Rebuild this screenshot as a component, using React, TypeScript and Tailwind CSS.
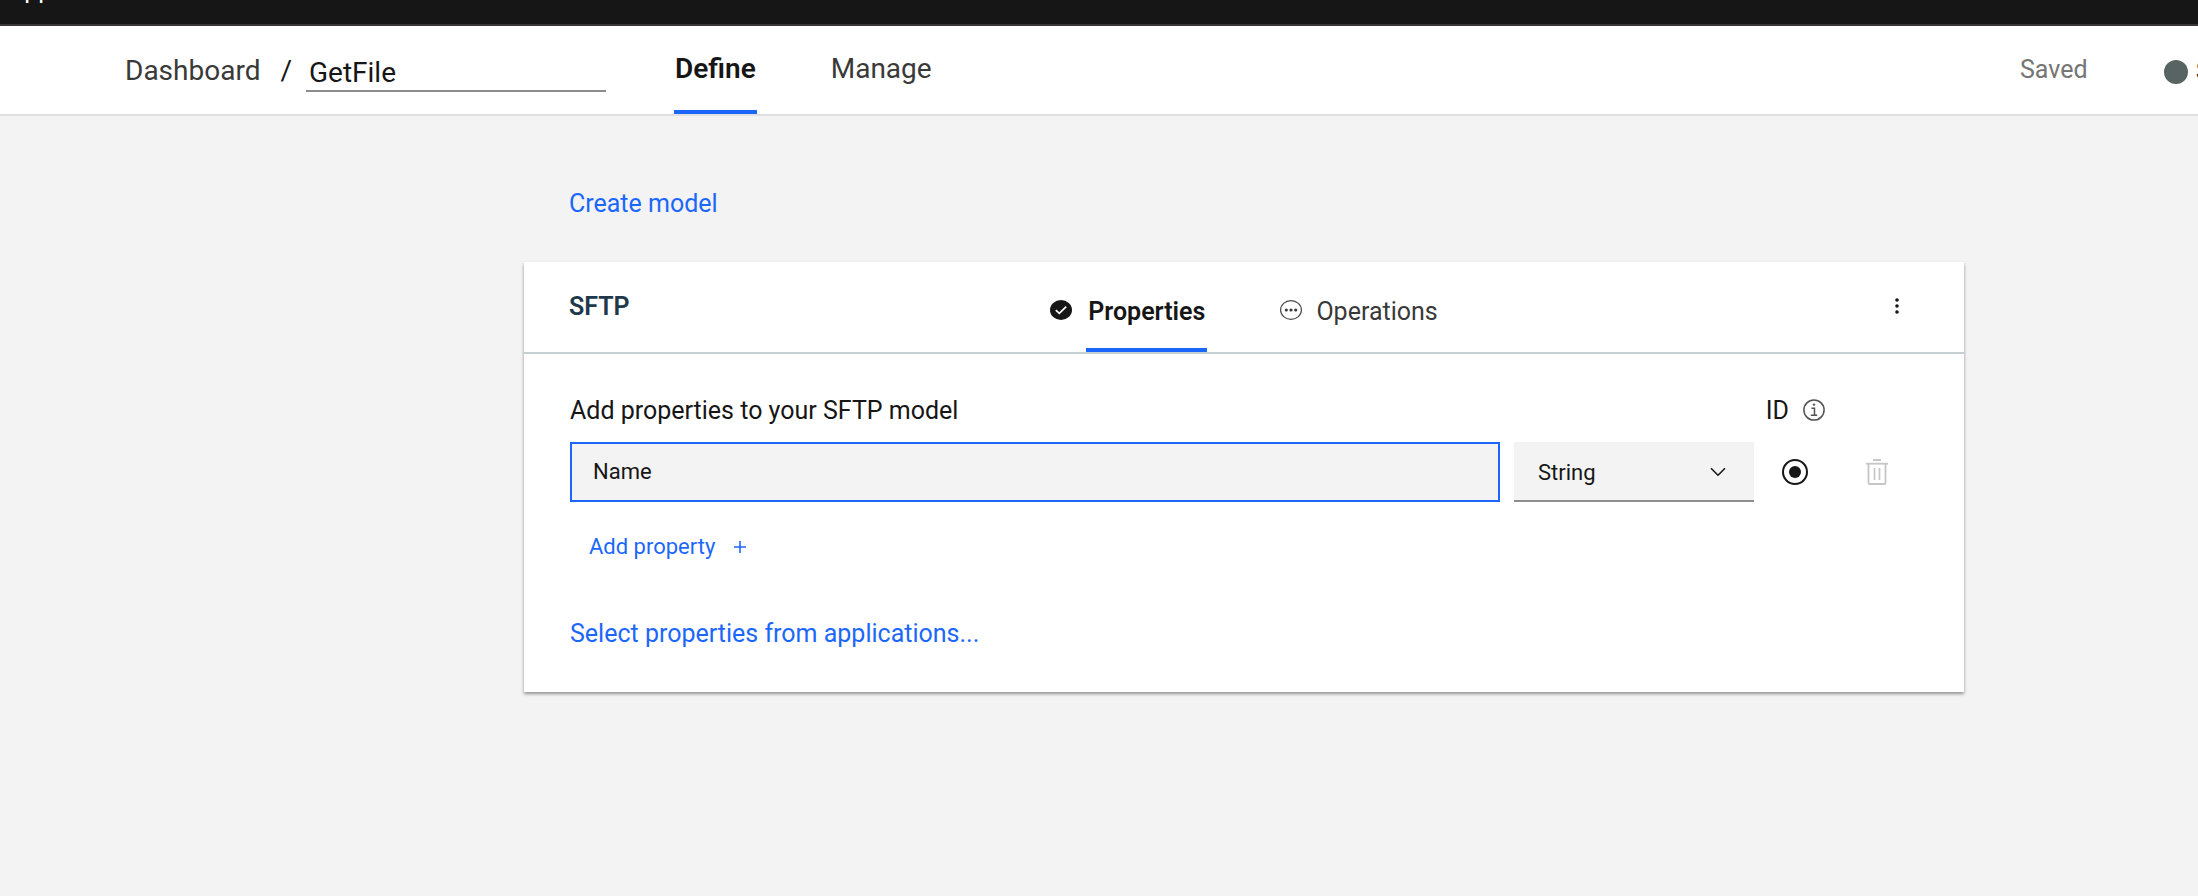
import { useState } from "react";

function CheckFilledIcon() {
  return (
    <svg width="22" height="20" viewBox="0 0 22 20" aria-hidden="true">
      <ellipse cx="11" cy="10" rx="11" ry="10" fill="#161616" />
      <path d="M5.8 10.2 9.3 13.3 16.2 6.6" fill="none" stroke="#fff" strokeWidth="1.7" />
    </svg>
  );
}

function PendingIcon() {
  return (
    <svg width="22" height="20" viewBox="0 0 22 20" aria-hidden="true">
      <ellipse cx="11" cy="10" rx="10.4" ry="9.4" fill="none" stroke="#4a4a4a" strokeWidth="1.2" />
      <circle cx="6.3" cy="10" r="1.6" fill="#393939" />
      <circle cx="11" cy="10" r="1.6" fill="#393939" />
      <circle cx="15.7" cy="10" r="1.6" fill="#393939" />
    </svg>
  );
}

function OverflowIcon() {
  return (
    <svg width="4" height="16" viewBox="0 0 4 16" aria-hidden="true">
      <circle cx="2" cy="2" r="1.8" fill="#161616" />
      <circle cx="2" cy="8" r="1.8" fill="#161616" />
      <circle cx="2" cy="14" r="1.8" fill="#161616" />
    </svg>
  );
}

function InfoIcon() {
  return (
    <svg width="22" height="22" viewBox="0 0 22 22" aria-hidden="true">
      <circle cx="11" cy="11" r="10.1" fill="none" stroke="#525252" strokeWidth="1.5" />
      <circle cx="11" cy="5.6" r="1.2" fill="#525252" />
      <path d="M8.4 9.3H11.5V16.2M7.8 16.2H14.2" fill="none" stroke="#525252" strokeWidth="1.5" />
    </svg>
  );
}

function TrashIcon() {
  return (
    <svg width="22" height="26" viewBox="0 0 22 26" fill="none" stroke="#c6c6c6" aria-hidden="true">
      <path d="M7 1H15" strokeWidth="2" />
      <path d="M0 4.7H22" strokeWidth="1.8" />
      <path d="M2.5 5V24Q2.5 25 3.5 25H18.5Q19.5 25 19.5 24V5" strokeWidth="1.8" />
      <path d="M8.5 9V21M13.5 9V21" strokeWidth="1.7" />
    </svg>
  );
}

export default function App() {
  const [model, setModel] = useState("GetFile");
  const [name, setName] = useState("Name");

  return (
    <div className="flex min-h-screen flex-col overflow-x-hidden bg-[#f3f3f3] font-['Roboto',sans-serif] text-[#161616]">
      <div className="-mt-14 h-[82px] shrink-0 border-b-2 border-[#393636] bg-[#161616] pt-[34px] pl-2 text-[25px] leading-6 text-white">
        App
      </div>

      <header className="flex h-[90px] shrink-0 items-center overflow-hidden border-b-2 border-[#e0e0e0] bg-white pl-[125px] text-[28px] leading-8 whitespace-nowrap">
        <a href="#dashboard" className="pt-0.5 text-[#393939]">
          Dashboard
        </a>
        <span className="ml-5 pt-0.5">/</span>
        <input
          aria-label="Flow name"
          value={model}
          onChange={(e) => setModel(e.target.value)}
          className="ml-[14px] h-11 w-[300px] border-b-2 border-[#8d8d8d] bg-transparent pt-1.5 pl-[3px] outline-none"
        />
        <nav className="ml-[68px] flex items-stretch gap-[74px] self-stretch">
          <a href="#define" className="flex items-center border-b-4 border-[#1c67fb] px-px pt-0.5 font-semibold">
            Define
          </a>
          <a href="#manage" className="flex items-center border-b-4 border-transparent pt-0.5 text-[#393939]">
            Manage
          </a>
        </nav>
        <div className="ml-auto flex w-[178px] shrink-0 items-center text-[25px]">
          <span className="w-[144px] shrink-0 text-[#757575]">Saved</span>
          <span className="flex shrink-0 items-center gap-2 pt-1 font-semibold">
            <span className="size-6 shrink-0 rounded-full bg-[#586463]" />
            Stopped
          </span>
        </div>
      </header>

      <main className="pt-[72px] pr-[234px] pl-[524px] text-[25px] leading-8">
        <a href="#create" className="ml-[45px] block w-fit text-[#1c67fb]">
          Create model
        </a>

        <section className="mt-[42px] bg-white shadow-[0_2px_3px_rgba(0,0,0,0.4)]">
          <div className="grid h-[92px] grid-cols-[1fr_auto_1fr] items-center border-b-2 border-[#c5d0d2] px-[45px]">
            <h2 className="font-semibold text-[#20384b]">SFTP</h2>
            <div role="tablist" className="flex gap-[73px] self-stretch">
              <div className="flex items-stretch gap-[14px]">
                <span className="flex items-center pt-1.5">
                  <CheckFilledIcon />
                </span>
                <button
                  role="tab"
                  aria-selected="true"
                  className="border-b-4 border-[#1c67fb] px-0.5 pt-[14px] font-semibold"
                >
                  Properties
                </button>
              </div>
              <div className="flex items-stretch gap-[14px]">
                <span className="flex items-center pt-1.5">
                  <PendingIcon />
                </span>
                <button
                  role="tab"
                  aria-selected="false"
                  className="border-b-4 border-transparent pt-[14px] text-[#393939]"
                >
                  Operations
                </button>
              </div>
            </div>
            <button aria-label="Model options" className="flex size-11 items-center justify-center justify-self-end pb-0.5">
              <OverflowIcon />
            </button>
          </div>

          <div className="px-[46px] pt-[41px] pb-[42px]">
            <div className="flex items-center">
              <label htmlFor="property-name">Add properties to your SFTP model</label>
              <div className="mr-[93px] ml-auto flex items-center gap-[14px]">
                <label htmlFor="property-id">ID</label>
                <button aria-label="About the ID" className="pb-0.5">
                  <InfoIcon />
                </button>
              </div>
            </div>

            <div className="mt-[15px] flex h-[60px] items-center text-[22px]">
              <input
                id="property-name"
                value={name}
                onChange={(e) => setName(e.target.value)}
                className="h-full min-w-0 flex-1 border-2 border-[#1c67fb] bg-[#f3f3f3] px-[21px] pb-0.5 outline-none"
              />
              <div className="relative ml-[14px] h-full w-60">
                <select
                  aria-label="Property type"
                  className="size-full appearance-none border-b-2 border-[#8d8d8d] bg-[#f3f3f3] pt-1 pl-6 outline-none"
                >
                  <option>String</option>
                </select>
                <svg
                  className="pointer-events-none absolute top-[25px] right-7"
                  width="16"
                  height="10"
                  viewBox="0 0 16 10"
                  fill="none"
                  stroke="#161616"
                  strokeWidth="1.6"
                  aria-hidden="true"
                >
                  <path d="M1 1.3 8 8.2 15 1.3" />
                </svg>
              </div>
              <input
                id="property-id"
                type="radio"
                defaultChecked
                className="ml-7 flex size-[26px] shrink-0 appearance-none items-center justify-center rounded-full border-2 border-[#161616] checked:before:size-3 checked:before:rounded-full checked:before:bg-[#161616]"
              />
              <button
                aria-label="Delete property"
                disabled
                className="mr-[19px] ml-[47px] flex size-11 shrink-0 items-center justify-center"
              >
                <TrashIcon />
              </button>
            </div>

            <button className="mt-[29px] ml-[19px] flex items-center gap-[19px] text-[22px] leading-8 text-[#1c67fb]">
              Add property
              <svg width="12" height="12" viewBox="0 0 12 12" stroke="#1c67fb" strokeWidth="1.6" aria-hidden="true">
                <path d="M6 0V12M0 6H12" />
              </svg>
            </button>

            <a href="#select" className="mt-[55px] block w-fit text-[#1c67fb]">
              Select properties from applications...
            </a>
          </div>
        </section>
      </main>
    </div>
  );
}
